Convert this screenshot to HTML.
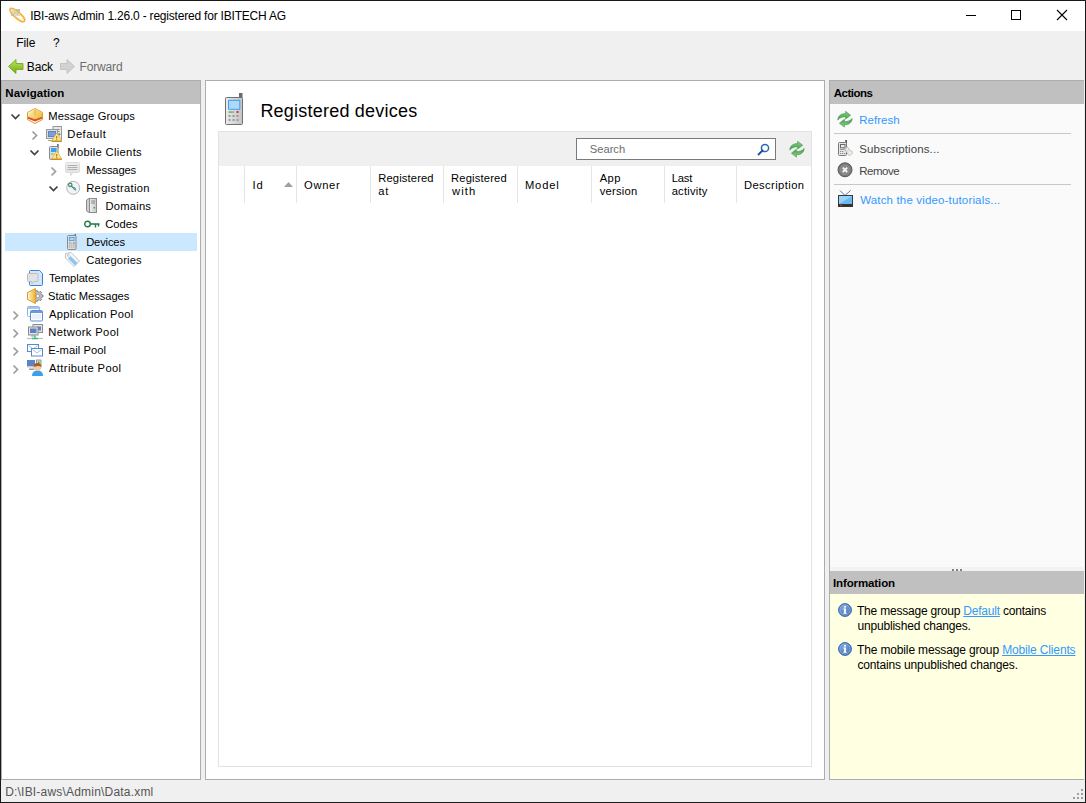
<!DOCTYPE html>
<html><head><meta charset="utf-8"><style>
html,body{margin:0;padding:0}
body{width:1086px;height:803px;background:#f0f0f0;position:relative;overflow:hidden;font-family:"Liberation Sans", sans-serif}
.b{position:absolute;box-sizing:border-box}
.t{position:absolute;white-space:pre;line-height:20px;font-family:"Liberation Sans", sans-serif} .t u{text-decoration:underline;color:#3399ff}
svg{position:absolute;overflow:visible}
</style></head><body>
<!-- window frame -->
<div class="b" style="left:0;top:0;width:1086px;height:803px;border:1px solid #1a1a1a"></div>
<!-- title bar -->
<div class="b" style="left:1px;top:1px;width:1084px;height:30px;background:#fff"></div>
<!-- window controls -->
<div class="b" style="left:966px;top:15px;width:10px;height:1px;background:#000"></div>
<div class="b" style="left:1011px;top:10px;width:10px;height:10px;border:1px solid #000"></div>
<svg style="left:1057px;top:10px" width="10" height="10" viewBox="0 0 10 10"><path d="M0 0L10 10M10 0L0 10" stroke="#000" stroke-width="1.1"/></svg>

<!-- nav panel -->
<div class="b" style="left:1px;top:80px;width:200px;height:700px;border:1px solid #adadad;background:#fff"></div>
<div class="b" style="left:2px;top:81px;width:198px;height:23px;background:#c0c0c0"></div>
<div class="b" style="left:5px;top:233px;width:192px;height:18px;background:#cce8ff"></div>

<!-- center panel -->
<div class="b" style="left:205px;top:80px;width:620px;height:700px;border:1px solid #adadad;background:#fff"></div>
<div class="b" style="left:218px;top:131px;width:594px;height:636px;border:1px solid #e3e3e3;background:#fff"></div>
<div class="b" style="left:219px;top:132px;width:592px;height:34px;background:#f0f0f0"></div>
<!-- search box -->
<div class="b" style="left:576px;top:138px;width:200px;height:22px;border:1px solid #7a7a7a;background:#fff"></div>
<!-- column separators -->
<div class="b" style="left:244px;top:166px;width:1px;height:37px;background:#e5e5e5"></div>
<div class="b" style="left:296px;top:166px;width:1px;height:37px;background:#e5e5e5"></div>
<div class="b" style="left:370px;top:166px;width:1px;height:37px;background:#e5e5e5"></div>
<div class="b" style="left:443px;top:166px;width:1px;height:37px;background:#e5e5e5"></div>
<div class="b" style="left:517px;top:166px;width:1px;height:37px;background:#e5e5e5"></div>
<div class="b" style="left:591px;top:166px;width:1px;height:37px;background:#e5e5e5"></div>
<div class="b" style="left:664px;top:166px;width:1px;height:37px;background:#e5e5e5"></div>
<div class="b" style="left:736px;top:166px;width:1px;height:37px;background:#e5e5e5"></div>
<!-- sort arrow -->
<svg style="left:284px;top:182px" width="9" height="5" viewBox="0 0 9 5"><path d="M0 5L4.5 0L9 5Z" fill="#a0a0a0"/></svg>

<!-- right panel -->
<div class="b" style="left:829px;top:80px;width:256px;height:700px;border:1px solid #adadad;border-right:none;background:#fafafa"></div>
<div class="b" style="left:830px;top:81px;width:254px;height:23px;background:#c0c0c0"></div>
<div class="b" style="left:834px;top:133px;width:237px;height:1px;background:#c8c8c8"></div>
<div class="b" style="left:834px;top:184px;width:237px;height:1px;background:#c8c8c8"></div>
<div class="b" style="left:830px;top:567px;width:254px;height:4px;background:#f3f3f3"></div>
<div class="b" style="left:952px;top:569px;width:2px;height:2px;background:#808080"></div>
<div class="b" style="left:956px;top:569px;width:2px;height:2px;background:#808080"></div>
<div class="b" style="left:960px;top:569px;width:2px;height:2px;background:#808080"></div>
<div class="b" style="left:830px;top:571px;width:254px;height:23px;background:#c0c0c0"></div>
<div class="b" style="left:830px;top:594px;width:254px;height:185px;background:#ffffe1"></div>
<div class="b" style="left:1084px;top:80px;width:1px;height:700px;background:#f0f0f0"></div>

<!-- title icon -->
<svg style="left:9px;top:7px" width="16" height="16" viewBox="0 0 16 16">
<rect x="2" y="2" width="9" height="7" fill="#a9c6e6"/>
<path d="M4.5 8 L6.8 3.5 L8.8 7.5" fill="none" stroke="#b8941c" stroke-width="1.1"/>
<ellipse cx="8.3" cy="8" rx="9.4" ry="3" transform="rotate(41 8.3 8)" fill="#fff6dc" fill-opacity="0.45" stroke="#efb445" stroke-width="1.7"/>
<ellipse cx="8.3" cy="8" rx="8.2" ry="1.9" transform="rotate(41 8.3 8)" fill="none" stroke="#fbe6b0" stroke-width="0.7"/>
</svg>
<!-- back arrow -->
<svg style="left:8px;top:59px" width="16" height="16" viewBox="0 0 16 16">
<defs><linearGradient id="gb" x1="0" y1="0" x2="0" y2="1"><stop offset="0" stop-color="#c2e45a"/><stop offset="1" stop-color="#6fae16"/></linearGradient></defs>
<path d="M0.5 7.5 L8 0.5 L8 4.5 L15 4.5 L15 10.5 L8 10.5 L8 14.5 Z" fill="url(#gb)" stroke="#6aa318" stroke-width="0.8" stroke-linejoin="round"/>
</svg>
<!-- forward arrow -->
<svg style="left:60px;top:59px" width="16" height="16" viewBox="0 0 16 16">
<path d="M14.5 7.5 L7 0.5 L7 4.5 L0.5 4.5 L0.5 10.5 L7 10.5 L7 14.5 Z" fill="#d2d2d2" stroke="#bcbcbc" stroke-width="0.8" stroke-linejoin="round"/>
</svg>

<!-- tree chevrons -->
<svg style="left:0;top:0" width="1" height="1">
<g fill="none" stroke-width="1.7">
<path d="M11.5 114.5 L15.5 118.5 L19.5 114.5" stroke="#404040"/>
<path d="M32.5 131.5 L36.5 135.5 L32.5 139.5" stroke="#9c9c9c"/>
<path d="M30.5 150.5 L34.5 154.5 L38.5 150.5" stroke="#404040"/>
<path d="M51.5 167.5 L55.5 171.5 L51.5 175.5" stroke="#9c9c9c"/>
<path d="M49.5 186.5 L53.5 190.5 L57.5 186.5" stroke="#404040"/>
<path d="M13.5 311.5 L17.5 315.5 L13.5 319.5" stroke="#9c9c9c"/>
<path d="M13.5 329.5 L17.5 333.5 L13.5 337.5" stroke="#9c9c9c"/>
<path d="M13.5 347.5 L17.5 351.5 L13.5 355.5" stroke="#9c9c9c"/>
<path d="M13.5 365.5 L17.5 369.5 L13.5 373.5" stroke="#9c9c9c"/>
</g>
</svg>

<!-- Message Groups -->
<svg style="left:27px;top:108px" width="16" height="16" viewBox="0 0 16 16">
<defs><linearGradient id="gm" x1="0" y1="0" x2="1" y2="0.6"><stop offset="0" stop-color="#fffbe8"/><stop offset="0.5" stop-color="#f6d878"/><stop offset="1" stop-color="#f0c040"/></linearGradient></defs>
<path d="M8 0.5 L15.5 4.5 L15.5 11.5 L8 15.5 L0.5 11.5 L0.5 4.5 Z" fill="#fffbe0" stroke="#d9a02a" stroke-width="1"/>
<path d="M8 1 L15 4.8 L15 9 L8 11.5 L1 9 L1 4.8 Z" fill="url(#gm)"/>
<path d="M1 8.8 L8 11.3 L15 8.8 L15 10.8 L8 13.5 L1 10.8 Z" fill="#d9503a"/>
<path d="M8 1.5 L8 7" stroke="#caa050" stroke-width="0.7"/>
</svg>
<!-- Default -->
<svg style="left:46px;top:126px" width="16" height="16" viewBox="0 0 16 16">
<rect x="7" y="0.5" width="8.5" height="15" fill="#e6e6e6" stroke="#9a9a9a" stroke-width="1"/>
<rect x="9" y="3" width="4.5" height="1" fill="#8a8a8a"/><rect x="9" y="5" width="4.5" height="1" fill="#8a8a8a"/>
<rect x="0.5" y="3.5" width="11" height="9" fill="#dcdcdc" stroke="#9a9a9a" stroke-width="1"/>
<rect x="2" y="5" width="8" height="6" fill="#5b84c6"/><rect x="3" y="6" width="6" height="4" fill="#7aa0d8"/>
<path d="M2 14.5 L6 14.5" stroke="#9a9a9a"/>
<circle cx="13.3" cy="8.3" r="1.1" fill="#3aa03a"/>
<path d="M10.7 7 L15.8 15 L5.6 15 Z" fill="#fbe88a" stroke="#e3b050" stroke-width="0.8" stroke-linejoin="round"/>
<path d="M5.3 15.3 H16" stroke="#d08a20" stroke-width="1.2"/>
<rect x="10.2" y="10" width="1" height="2.6" fill="#a06a20"/><rect x="10.2" y="13.3" width="1" height="1" fill="#a06a20"/>
</svg>
<!-- Mobile Clients -->
<svg style="left:46px;top:144px" width="16" height="16" viewBox="0 0 16 16">
<rect x="11.2" y="0" width="1.4" height="4" fill="#555"/>
<rect x="3.5" y="2.5" width="8.5" height="13" rx="1" fill="#dedede" stroke="#8a8a8a" stroke-width="1"/>
<rect x="5" y="4" width="5.5" height="4" fill="#3aa0f0"/>
<rect x="5" y="9.5" width="2.5" height="1" fill="#5cbf5c"/>
<path d="M10.7 7 L15.8 15 L5.6 15 Z" fill="#fbe88a" stroke="#e3b050" stroke-width="0.8" stroke-linejoin="round"/>
<path d="M5.3 15.3 H16" stroke="#d08a20" stroke-width="1.2"/>
<rect x="10.2" y="10" width="1" height="2.6" fill="#a06a20"/><rect x="10.2" y="13.3" width="1" height="1" fill="#a06a20"/>
</svg>
<!-- Messages -->
<svg style="left:65px;top:162px" width="16" height="16" viewBox="0 0 16 16">
<defs><linearGradient id="gmsg" x1="0" y1="0" x2="0" y2="1"><stop offset="0" stop-color="#f0f0f0"/><stop offset="1" stop-color="#dedede"/></linearGradient></defs>
<path d="M0.5 1.5 Q0.5 0.5 1.5 0.5 L13.5 0.5 Q14.5 0.5 14.5 1.5 L14.5 9.5 Q14.5 10.5 13.5 10.5 L8 10.5 L5.5 13.8 L5.5 10.5 L1.5 10.5 Q0.5 10.5 0.5 9.5 Z" fill="url(#gmsg)" stroke="#dcdcdc" stroke-width="1"/>
<path d="M2.5 3.5 H12.5 M2.5 5.5 H12.5 M2.5 7.5 H12.5" stroke="#a9a9a9" stroke-width="0.9"/>
</svg>
<!-- Registration -->
<svg style="left:65px;top:180px" width="16" height="16" viewBox="0 0 16 16">
<circle cx="8.2" cy="7.8" r="6.5" fill="#f2f2fb" stroke="#b4b4b4" stroke-width="1"/>
<circle cx="5.2" cy="4.8" r="1.7" fill="none" stroke="#3f8f62" stroke-width="1.25"/>
<path d="M6.4 6 L10.8 10.4 M8.8 8.4 L9.8 7.4 M10 9.6 L11 8.6" stroke="#3f8f62" stroke-width="1.25"/>
</svg>
<!-- Domains -->
<svg style="left:84px;top:198px" width="16" height="16" viewBox="0 0 16 16">
<defs><linearGradient id="gdom" x1="0" y1="0" x2="1" y2="0"><stop offset="0" stop-color="#f2f2f2"/><stop offset="1" stop-color="#c8c8c8"/></linearGradient></defs>
<path d="M2.5 3 Q2.5 1.5 4 1 L5.5 0.5 L5.5 14.5 L4 14 Q2.5 13.5 2.5 12 Z" fill="#d0d0d0" stroke="#8c8c8c" stroke-width="1"/>
<rect x="5.5" y="0.5" width="7" height="14" fill="url(#gdom)" stroke="#8c8c8c" stroke-width="1"/>
<rect x="7" y="2.6" width="4" height="0.9" fill="#7e7e7e"/><rect x="7" y="4.6" width="4" height="0.9" fill="#7e7e7e"/>
<rect x="9.5" y="9" width="1.6" height="1.5" fill="#30b030"/>
</svg>
<!-- Codes key -->
<svg style="left:84px;top:216px" width="16" height="16" viewBox="0 0 16 16">
<circle cx="3.5" cy="8" r="2.8" fill="none" stroke="#1f7a45" stroke-width="1.4"/>
<path d="M6.3 8 H15.5 M11.5 8 V11.5 M14.5 8 V10.5" stroke="#1f7a45" stroke-width="1.4"/>
</svg>
<!-- Devices -->
<svg style="left:65px;top:234px" width="16" height="16" viewBox="0 0 16 16">
<rect x="9.6" y="0" width="1.3" height="3" fill="#555"/>
<rect x="2.5" y="1.5" width="8.5" height="14" rx="1" fill="#dcdcdc" stroke="#8a8a8a" stroke-width="1"/>
<rect x="4" y="3" width="5.5" height="4" fill="#3aa0f0"/><rect x="4.8" y="3.8" width="4" height="2.4" fill="#a8d8f8"/>
<rect x="4" y="8.5" width="2.5" height="1" fill="#5cbf5c"/><rect x="8" y="8.5" width="1.5" height="1" fill="#e03030"/>
<rect x="4" y="10.5" width="1.2" height="1" fill="#999"/><rect x="6.2" y="10.5" width="1.2" height="1" fill="#999"/><rect x="8.4" y="10.5" width="1.2" height="1" fill="#999"/>
<rect x="4" y="12.5" width="1.2" height="1" fill="#999"/><rect x="6.2" y="12.5" width="1.2" height="1" fill="#999"/><rect x="8.4" y="12.5" width="1.2" height="1" fill="#999"/>
</svg>
<!-- Categories tag -->
<svg style="left:65px;top:252px" width="16" height="16" viewBox="0 0 16 16">
<path d="M0.5 1.5 L6 0.5 L14.5 9 L9 14.5 L0.5 6 Z" fill="#f6f6f6" stroke="#c4c4c4" stroke-width="1" stroke-linejoin="round"/>
<path d="M5.5 4 L12.5 11 L10 13.5 L3 6.5 Z" fill="#8cc4f4"/>
<circle cx="3.3" cy="3.3" r="1" fill="#fff" stroke="#b0b0b0" stroke-width="0.7"/>
</svg>
<!-- Templates -->
<svg style="left:27px;top:270px" width="16" height="16" viewBox="0 0 16 16">
<path d="M2.5 1.5 Q2.5 0.5 3.5 0.5 L12.5 0.5 L15.5 3.5 L15.5 14.5 Q15.5 15.5 14.5 15.5 L3.5 15.5 Q2.5 15.5 2.5 14.5 Z" fill="#d4e6fc" stroke="#3c7fd8" stroke-width="1"/>
<path d="M0.5 4.5 Q0.5 3.5 1.5 3.5 L10 3.5 Q11 3.5 11 4.5 L11 10.5 Q11 11.5 10 11.5 L7 11.5 L5 13.5 L5 11.5 L1.5 11.5 Q0.5 11.5 0.5 10.5 Z" fill="#e2e2e2" stroke="#bdbdbd" stroke-width="1"/>
</svg>
<!-- Static Messages -->
<svg style="left:27px;top:288px" width="16" height="16" viewBox="0 0 16 16">
<defs><linearGradient id="gs" x1="0" y1="0" x2="1" y2="0"><stop offset="0" stop-color="#fff6d8"/><stop offset="1" stop-color="#eeb030"/></linearGradient></defs>
<path d="M14.20 6.26 L14.46 6.94 L15.91 7.04 L15.91 8.96 L14.46 9.06 L14.20 9.74 L13.84 10.35 L14.67 11.55 L13.16 12.76 L12.17 11.68 L11.49 11.90 L10.78 12.00 L10.36 13.39 L8.48 12.97 L8.70 11.52 L8.11 11.13 L7.59 10.63 L6.23 11.17 L5.39 9.44 L6.66 8.71 L6.60 8.00 L6.66 7.29 L5.39 6.56 L6.23 4.83 L7.59 5.37 L8.11 4.87 L8.70 4.48 L8.48 3.03 L10.36 2.61 L10.78 4.00 L11.49 4.10 L12.17 4.32 L13.16 3.24 L14.67 4.45 L13.84 5.65Z" fill="#c4c4c4" stroke="#707070" stroke-width="0.8" stroke-linejoin="round"/>
<circle cx="10.8" cy="8" r="1.8" fill="#f4f4f4" stroke="#7a7a7a" stroke-width="0.6"/>
<path d="M8.5 0.5 L0.5 4.5 L0.5 11.5 L8.5 15.5 Z" fill="url(#gs)" stroke="#d9a02a" stroke-width="1" stroke-linejoin="round"/>
</svg>
<!-- Application Pool -->
<svg style="left:27px;top:306px" width="16" height="16" viewBox="0 0 16 16">
<rect x="0.5" y="0.5" width="12" height="10" rx="1" fill="#fff" stroke="#8fb2e2" stroke-width="1"/>
<rect x="1" y="1" width="11" height="2" fill="#a8c4ec"/>
<rect x="3.5" y="4.5" width="12" height="10.5" rx="1" fill="#fbfdff" stroke="#5b8fd6" stroke-width="1"/>
<rect x="4" y="5" width="11" height="2" fill="#6a9ade"/>
<rect x="5" y="8" width="9" height="5" fill="#e8f0fb"/>
</svg>
<!-- Network Pool -->
<svg style="left:27px;top:324px" width="16" height="16" viewBox="0 0 16 16">
<rect x="6" y="0.5" width="9.5" height="8" fill="#e4e4e4" stroke="#8c8c8c" stroke-width="1"/>
<rect x="10" y="2.5" width="4" height="4" fill="#5b84c6"/>
<rect x="1.5" y="3" width="9.5" height="8" fill="#e4e4e4" stroke="#8c8c8c" stroke-width="1"/>
<rect x="3" y="4.5" width="6.5" height="4.5" fill="#5b84c6"/>
<path d="M4 12 H8" stroke="#9a9a9a"/>
<path d="M0 14.5 H16" stroke="#b8c0c0" stroke-width="1.2"/>
<path d="M5 14.5 H11 M8 11.5 V14" stroke="#40c080" stroke-width="1.4"/>
</svg>
<!-- E-mail Pool -->
<svg style="left:27px;top:342px" width="16" height="16" viewBox="0 0 16 16">
<rect x="0.5" y="2.5" width="11" height="7" fill="#fff" stroke="#5a8ad0" stroke-width="1"/>
<path d="M1.5 3.5 L6 7 L10.5 3.5" fill="none" stroke="#8fb0e0" stroke-width="0.8"/>
<rect x="4.5" y="6.5" width="11" height="7.5" fill="#fff" stroke="#5a8ad0" stroke-width="1"/>
<path d="M5.5 7.5 L10 11 L14.5 7.5" fill="none" stroke="#8fb0e0" stroke-width="0.8"/>
</svg>
<!-- Attribute Pool -->
<svg style="left:27px;top:360px" width="16" height="16" viewBox="0 0 16 16">
<rect x="0" y="0" width="8" height="6" fill="#5b84c6"/>
<rect x="0" y="6" width="8" height="1.5" fill="#c8c8c8"/>
<rect x="2" y="8.5" width="5" height="1.5" fill="#9a9a9a"/>
<rect x="9.5" y="0" width="4.5" height="7" fill="#d8d8d8" stroke="#888" stroke-width="0.8"/>
<rect x="11" y="1.5" width="1.5" height="2" fill="#30b030"/>
<path d="M5 16 Q5 10.5 10.5 10.5 Q16 10.5 16 16 Z" fill="#3aa0f0"/>
<circle cx="10.5" cy="7" r="3.8" fill="#f2c8a0"/>
<path d="M6.7 7 Q6.5 3 10.5 3 Q14.5 3 14.3 7 Q12 5 6.7 7Z" fill="#a85a20"/>
</svg>

<!-- header phone 32px -->
<svg style="left:224px;top:93px" width="20" height="33" viewBox="0 0 20 33">
<defs><linearGradient id="gp" x1="0" y1="0" x2="1" y2="0"><stop offset="0" stop-color="#ececec"/><stop offset="1" stop-color="#c4c4c4"/></linearGradient></defs>
<rect x="15" y="0" width="3.5" height="5" fill="#6a6a6a"/>
<rect x="1.5" y="4.5" width="17" height="27" rx="1" fill="url(#gp)" stroke="#707070" stroke-width="1"/>
<rect x="4" y="6.8" width="12.3" height="10" rx="1" fill="#3b9cf0"/>
<rect x="5" y="7.8" width="10.3" height="8" fill="#aed8f8"/>
<rect x="4.5" y="18.3" width="4" height="1.6" fill="#60c060"/><rect x="8.5" y="18.3" width="1.5" height="1.6" fill="#999"/><rect x="12.5" y="18" width="2" height="2" fill="#e03040"/>
<g fill="#9a9a9a"><rect x="4.5" y="22" width="2" height="2"/><rect x="8.5" y="22" width="2" height="2"/><rect x="12.5" y="22" width="2" height="2"/>
<rect x="4.5" y="26" width="2" height="2"/><rect x="8.5" y="26" width="2" height="2"/><rect x="12.5" y="26" width="2" height="2"/></g>
</svg>
<!-- search magnifier -->
<svg style="left:756px;top:142px" width="16" height="16" viewBox="0 0 16 16">
<circle cx="9" cy="6" r="3.6" fill="none" stroke="#2a68b8" stroke-width="1.5"/>
<path d="M6.5 8.5 L2.5 12.5" stroke="#1e4f96" stroke-width="1.8" stroke-linecap="round"/>
</svg>

<!-- refresh icons -->
<svg style="left:789px;top:141px" width="16" height="16" viewBox="0 0 16 16">
<defs><linearGradient id="gr" x1="0" y1="0" x2="0" y2="1"><stop offset="0" stop-color="#8ed08a"/><stop offset="1" stop-color="#3f9e46"/></linearGradient></defs>
<g fill="url(#gr)" stroke="#3c9444" stroke-width="0.6" stroke-linejoin="round">
<path d="M0.8 9 C1 4.8 4 2.6 8.6 2.6 L8.6 0.3 L13.6 4.2 L8.6 8.1 L8.6 5.7 C5.2 5.7 2.6 6.8 0.8 9 Z"/>
<path d="M0.8 9 C1 4.8 4 2.6 8.6 2.6 L8.6 0.3 L13.6 4.2 L8.6 8.1 L8.6 5.7 C5.2 5.7 2.6 6.8 0.8 9 Z" transform="rotate(180 8 8.2)"/>
</g>
</svg>
<svg style="left:837px;top:111px" width="16" height="16" viewBox="0 0 16 16">
<defs><linearGradient id="gr" x1="0" y1="0" x2="0" y2="1"><stop offset="0" stop-color="#8ed08a"/><stop offset="1" stop-color="#3f9e46"/></linearGradient></defs>
<g fill="url(#gr)" stroke="#3c9444" stroke-width="0.6" stroke-linejoin="round">
<path d="M0.8 9 C1 4.8 4 2.6 8.6 2.6 L8.6 0.3 L13.6 4.2 L8.6 8.1 L8.6 5.7 C5.2 5.7 2.6 6.8 0.8 9 Z"/>
<path d="M0.8 9 C1 4.8 4 2.6 8.6 2.6 L8.6 0.3 L13.6 4.2 L8.6 8.1 L8.6 5.7 C5.2 5.7 2.6 6.8 0.8 9 Z" transform="rotate(180 8 8.2)"/>
</g>
</svg>
<!-- subscriptions -->
<svg style="left:835px;top:138px" width="20" height="20" viewBox="0 0 20 20">
<rect x="10.2" y="2" width="1.8" height="7" fill="#5a5a5a"/>
<rect x="3.5" y="4.5" width="8" height="13" rx="1" fill="#e6e6e6" stroke="#7a7a7a" stroke-width="1"/>
<rect x="5.5" y="6.5" width="4.5" height="3.3" fill="#ececec" stroke="#6a6a6a" stroke-width="1"/>
<rect x="5" y="11" width="5" height="1" fill="#9a9a9a"/>
<g fill="#8a8a8a"><rect x="5" y="13" width="1.2" height="1"/><rect x="7" y="13" width="1.2" height="1"/><rect x="5" y="15" width="1.2" height="1"/><rect x="7" y="15" width="1.2" height="1"/><rect x="9" y="15" width="1.2" height="1"/></g>
<path d="M9.3 11.2 L12 8.8 L18 14.5 L14.5 18 Z" fill="#f6f6f6" stroke="#8e8e8e" stroke-width="0.9" stroke-dasharray="1 0.8" stroke-linejoin="round"/>
<path d="M11.5 12 L15 15.5 M13 11 L16.5 14.5" stroke="#a8a8a8" stroke-width="0.9" stroke-dasharray="1 0.8"/>
<rect x="10.5" y="10.3" width="1.2" height="1.2" fill="#a0a0a0"/>
</svg>
<!-- remove -->
<svg style="left:837px;top:162px" width="16" height="16" viewBox="0 0 16 16">
<circle cx="8" cy="7.8" r="7" fill="#767676" stroke="#5a5a5a" stroke-width="1"/>
<circle cx="8" cy="7.8" r="5.5" fill="#8a8a8a"/>
<path d="M5.8 5.6 L10.2 10 M10.2 5.6 L5.8 10" stroke="#f4f4f4" stroke-width="1.8"/>
</svg>
<!-- tv -->
<svg style="left:838px;top:190px" width="16" height="18" viewBox="0 0 16 18">
<path d="M2 0.5 L7 5.5 L12.5 0.5" fill="none" stroke="#4a78c0" stroke-width="1"/>
<rect x="0.5" y="5.5" width="14" height="11" fill="#6ab8f0" stroke="#3a3a3a" stroke-width="1"/>
<path d="M1 6 L14 6 L1 14Z" fill="#9ad2f8"/>
<rect x="0.5" y="14" width="14" height="2.5" fill="#333"/>
<rect x="2" y="14.7" width="2" height="1.2" fill="#e03030"/>
</svg>
<!-- info icons -->
<svg style="left:838px;top:603px" width="14" height="14" viewBox="0 0 14 14">
<defs><radialGradient id="gi" cx="0.4" cy="0.35" r="0.7"><stop offset="0" stop-color="#7ea6da"/><stop offset="1" stop-color="#4272b8"/></radialGradient></defs>
<circle cx="7" cy="7" r="6.4" fill="url(#gi)" stroke="#3365b0" stroke-width="1"/>
<circle cx="7" cy="7" r="5.1" fill="none" stroke="#b0ccee" stroke-width="0.6" opacity="0.8"/>
<rect x="6.1" y="3" width="1.9" height="1.6" fill="#fff"/>
<path d="M5.4 5.6 H7.9 V9.8 H8.7 V10.8 H5.3 V9.8 H6.1 V6.6 H5.4Z" fill="#fff"/>
</svg>
<svg style="left:838px;top:642px" width="14" height="14" viewBox="0 0 14 14">
<circle cx="7" cy="7" r="6.4" fill="url(#gi)" stroke="#3365b0" stroke-width="1"/>
<circle cx="7" cy="7" r="5.1" fill="none" stroke="#b0ccee" stroke-width="0.6" opacity="0.8"/>
<rect x="6.1" y="3" width="1.9" height="1.6" fill="#fff"/>
<path d="M5.4 5.6 H7.9 V9.8 H8.7 V10.8 H5.3 V9.8 H6.1 V6.6 H5.4Z" fill="#fff"/>
</svg>
<!-- resize grip -->
<svg style="left:1072px;top:788px" width="12" height="12" viewBox="0 0 12 12">
<g fill="#a0a0a0"><rect x="9" y="1" width="2" height="2"/><rect x="5" y="5" width="2" height="2"/><rect x="9" y="5" width="2" height="2"/><rect x="1" y="9" width="2" height="2"/><rect x="5" y="9" width="2" height="2"/><rect x="9" y="9" width="2" height="2"/></g>
</svg>

<div class='t' style='left:30.2px;top:6px;font-size:12px;font-weight:400;color:#000;letter-spacing:-0.202px;'>IBI-aws Admin 1.26.0 - registered for IBITECH AG</div>
<div class='t' style='left:16.2px;top:33px;font-size:12px;font-weight:400;color:#000;letter-spacing:-0.067px;'>File</div>
<div class='t' style='left:53.0px;top:33px;font-size:12px;font-weight:400;color:#000;letter-spacing:0.000px;'>?</div>
<div class='t' style='left:26.8px;top:57px;font-size:12px;font-weight:400;color:#000;letter-spacing:-0.167px;'>Back</div>
<div class='t' style='left:79.5px;top:57px;font-size:12px;font-weight:400;color:#6d6d6d;letter-spacing:-0.150px;'>Forward</div>
<div class='t' style='left:5.3px;top:83px;font-size:11.5px;font-weight:700;color:#000;letter-spacing:0.033px;'>Navigation</div>
<div class='t' style='left:833.8px;top:83px;font-size:11.5px;font-weight:700;color:#000;letter-spacing:-0.500px;'>Actions</div>
<div class='t' style='left:832.9px;top:573px;font-size:11.5px;font-weight:700;color:#000;letter-spacing:-0.100px;'>Information</div>
<div class='t' style='left:48.3px;top:106px;font-size:11.2px;font-weight:400;color:#000;letter-spacing:0.108px;'>Message Groups</div>
<div class='t' style='left:67.3px;top:124px;font-size:11.2px;font-weight:400;color:#000;letter-spacing:0.500px;'>Default</div>
<div class='t' style='left:67.3px;top:142px;font-size:11.2px;font-weight:400;color:#000;letter-spacing:0.315px;'>Mobile Clients</div>
<div class='t' style='left:86.2px;top:160px;font-size:11.2px;font-weight:400;color:#000;letter-spacing:-0.143px;'>Messages</div>
<div class='t' style='left:86.2px;top:178px;font-size:11.2px;font-weight:400;color:#000;letter-spacing:0.336px;'>Registration</div>
<div class='t' style='left:105.6px;top:196px;font-size:11.2px;font-weight:400;color:#000;letter-spacing:0.200px;'>Domains</div>
<div class='t' style='left:105.2px;top:214px;font-size:11.2px;font-weight:400;color:#000;letter-spacing:0.025px;'>Codes</div>
<div class='t' style='left:86.2px;top:232px;font-size:11.2px;font-weight:400;color:#000;letter-spacing:-0.167px;'>Devices</div>
<div class='t' style='left:86.2px;top:250px;font-size:11.2px;font-weight:400;color:#000;letter-spacing:0.156px;'>Categories</div>
<div class='t' style='left:49.0px;top:268px;font-size:11.2px;font-weight:400;color:#000;letter-spacing:-0.037px;'>Templates</div>
<div class='t' style='left:48.0px;top:286px;font-size:11.2px;font-weight:400;color:#000;letter-spacing:-0.050px;'>Static Messages</div>
<div class='t' style='left:49.0px;top:304px;font-size:11.2px;font-weight:400;color:#000;letter-spacing:0.267px;'>Application Pool</div>
<div class='t' style='left:48.3px;top:322px;font-size:11.2px;font-weight:400;color:#000;letter-spacing:0.355px;'>Network Pool</div>
<div class='t' style='left:48.3px;top:340px;font-size:11.2px;font-weight:400;color:#000;letter-spacing:0.040px;'>E-mail Pool</div>
<div class='t' style='left:49.0px;top:358px;font-size:11.2px;font-weight:400;color:#000;letter-spacing:0.377px;'>Attribute Pool</div>
<div class='t' style='left:260.4px;top:101px;font-size:18px;font-weight:400;color:#000;letter-spacing:0.218px;'>Registered devices</div>
<div class='t' style='left:589.8px;top:139px;font-size:11.2px;font-weight:400;color:#6d6d6d;letter-spacing:-0.020px;'>Search</div>
<div class='t' style='left:252.4px;top:175px;font-size:11.2px;font-weight:400;color:#000;letter-spacing:1.100px;'>Id</div>
<div class='t' style='left:304.1px;top:175px;font-size:11.2px;font-weight:400;color:#000;letter-spacing:0.650px;'>Owner</div>
<div class='t' style='left:378.2px;top:168px;font-size:11.2px;font-weight:400;color:#000;letter-spacing:0.144px;'>Registered</div>
<div class='t' style='left:378.2px;top:181px;font-size:11.2px;font-weight:400;color:#000;letter-spacing:0.900px;'>at</div>
<div class='t' style='left:451.0px;top:168px;font-size:11.2px;font-weight:400;color:#000;letter-spacing:0.178px;'>Registered</div>
<div class='t' style='left:452.0px;top:181px;font-size:11.2px;font-weight:400;color:#000;letter-spacing:1.100px;'>with</div>
<div class='t' style='left:525.0px;top:175px;font-size:11.2px;font-weight:400;color:#000;letter-spacing:0.800px;'>Model</div>
<div class='t' style='left:599.7px;top:168px;font-size:11.2px;font-weight:400;color:#000;letter-spacing:0.400px;'>App</div>
<div class='t' style='left:599.7px;top:181px;font-size:11.2px;font-weight:400;color:#000;letter-spacing:0.233px;'>version</div>
<div class='t' style='left:671.7px;top:168px;font-size:11.2px;font-weight:400;color:#000;letter-spacing:-0.200px;'>Last</div>
<div class='t' style='left:671.7px;top:181px;font-size:11.2px;font-weight:400;color:#000;letter-spacing:0.200px;'>activity</div>
<div class='t' style='left:743.9px;top:175px;font-size:11.2px;font-weight:400;color:#000;letter-spacing:0.420px;'>Description</div>
<div class='t' style='left:859.3px;top:110px;font-size:11.5px;font-weight:400;color:#3399ff;letter-spacing:0.000px;'>Refresh</div>
<div class='t' style='left:859.2px;top:139px;font-size:11.5px;font-weight:400;color:#444;letter-spacing:0.107px;'>Subscriptions...</div>
<div class='t' style='left:859.2px;top:161px;font-size:11.5px;font-weight:400;color:#444;letter-spacing:-0.460px;'>Remove</div>
<div class='t' style='left:860.2px;top:190px;font-size:11.5px;font-weight:400;color:#3399ff;letter-spacing:0.159px;'>Watch the video-tutorials...</div>
<div class='t' style='left:857.0px;top:601px;font-size:12px;font-weight:400;color:#000;letter-spacing:-0.212px;'>The message group <u>Default</u> contains</div>
<div class='t' style='left:857.4px;top:616px;font-size:12px;font-weight:400;color:#000;letter-spacing:-0.174px;'>unpublished changes.</div>
<div class='t' style='left:857.0px;top:640px;font-size:12px;font-weight:400;color:#000;letter-spacing:-0.145px;'>The mobile message group <u>Mobile Clients</u></div>
<div class='t' style='left:857.4px;top:655px;font-size:12px;font-weight:400;color:#000;letter-spacing:-0.150px;'>contains unpublished changes.</div>
<div class='t' style='left:5.2px;top:782px;font-size:12px;font-weight:400;color:#555;letter-spacing:0.196px;'>D:\IBI-aws\Admin\Data.xml</div>
</body></html>
